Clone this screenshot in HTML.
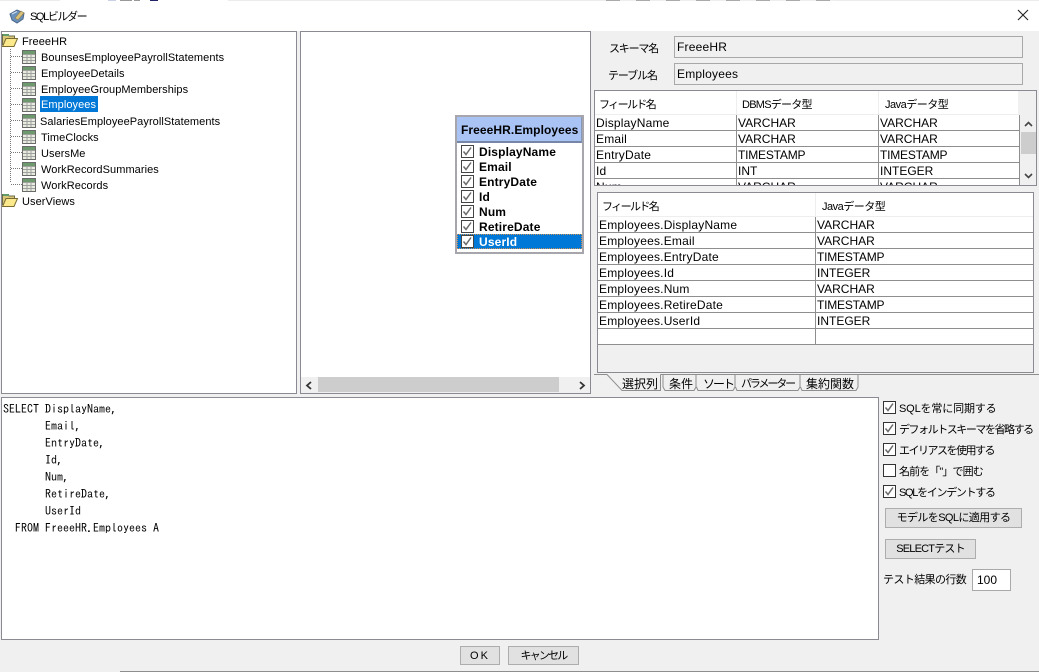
<!DOCTYPE html>
<html><head><meta charset="utf-8"><style>
html,body{margin:0;padding:0}
body{width:1039px;height:672px;position:relative;overflow:hidden;background:#f0f0f0;font:12px "Liberation Sans","Noto Sans CJK JP",sans-serif;color:#000}
div,span,svg{position:absolute;box-sizing:border-box}
.t{white-space:nowrap;line-height:16px;height:16px}
.s{font-size:11px;margin-top:1px}
.tr{font-size:11px;letter-spacing:.07px;margin-top:1px}
.n{letter-spacing:.2px}
.b{border:1px solid #8a8a92;background:#fff}
.h{left:0;height:1px;background:#8e8e8e}
.v{width:1px;background:#8e8e8e}
.btn{background:#e1e1e1;border:1px solid #adadad;text-align:center;line-height:19px;white-space:nowrap;font-size:11px}
.tb{left:461px;font:bold 12px/15px "Liberation Sans",sans-serif;letter-spacing:.15px;white-space:nowrap}
</style></head><body>
<svg width="0" height="0" style="left:0;top:0"><defs>
<g id="tbl"><rect x=".5" y=".5" width="13" height="13" fill="#e8ecdf" stroke="#6a6a6a"/><rect x="1" y="1" width="12" height="3" fill="#6d9a6d"/><path d="M1 4.500H13M1 7.500H13M1 10.500H13M5 4V13M9 4V13" stroke="#a0a0a0" fill="none"/></g>
<g id="fld"><path d="M1.500 13V2.500H7L8 4H13.500V6" fill="#d8c878" stroke="#6b6b45"/><path d="M2 2H8V4H2z" fill="#5f9a6a"/><path d="M1.500 14.500L5 6.500H16.500L13 14.500Z" fill="#fbe98b" stroke="#7a6a30"/></g>
<g id="chk"><path d="M2.500 6.500L5 9.500L10 2.500" fill="none" stroke="#6a6a6a" stroke-width="1.500"/></g>
</defs></svg>

<!-- title bar -->
<div style="left:0;top:0;width:1039px;height:31px;background:#fff"></div>
<div style="left:0;top:0;width:1039px;height:1px;background:#ececec"></div>
<div style="left:60px;top:0;width:168px;height:1px;background:linear-gradient(90deg,#fff 0,#fff 48px,#c8d0ea 48px,#c8d0ea 56px,#fff 56px,#fff 60px,#999 60px,#999 72px,#fff 72px,#fff 74px,#999 74px,#999 80px,#fff 80px,#fff 90px,#226 90px,#226 98px,#fff 98px)"></div>
<div style="left:606px;top:0;width:230px;height:1px;background:repeating-linear-gradient(90deg,#aaa 0 14px,#eee 14px 30px)"></div>
<svg style="left:9px;top:8px" width="17" height="16"><path d="M1 6L8 2L15 5L14 11L8 15L3 12Z" fill="#6a90bc" stroke="#4a6688"/><path d="M6 10L12 3L15 5L9 12Z" fill="#d9c27a" stroke="#8a7a50" stroke-width=".6"/><path d="M3 6L8 3.500" stroke="#d4e2f0" fill="none"/></svg>
<div class="t s" style="left:30px;top:8px;letter-spacing:-1.400px">SQLビルダー</div>
<svg style="left:1017px;top:9px" width="12" height="12"><path d="M1 1L11 11M11 1L1 11" stroke="#222" stroke-width="1.100" fill="none"/></svg>

<!-- tree -->
<div class="b" style="left:1px;top:31px;width:296px;height:363px"></div>
<svg style="left:0;top:31px" width="40" height="180">
<path d="M10.500 18V152M11 25.500H22M11 41.500H22M11 57.500H22M11 73.500H22M11 89.500H22M11 105.500H22M11 121.500H22M11 137.500H22M11 153.500H22" stroke="#777" stroke-dasharray="1 1" fill="none"/>
<use href="#fld" x="1" y="1"/><use href="#fld" x="1" y="161"/>
<use href="#tbl" x="22" y="19"/><use href="#tbl" x="22" y="35"/><use href="#tbl" x="22" y="51"/><use href="#tbl" x="22" y="67"/><use href="#tbl" x="22" y="83"/><use href="#tbl" x="22" y="99"/><use href="#tbl" x="22" y="115"/><use href="#tbl" x="22" y="131"/><use href="#tbl" x="22" y="147"/>
</svg>
<div class="t tr" style="left:22px;top:33px">FreeeHR</div>
<div class="t tr" style="left:41px;top:49px">BounsesEmployeePayrollStatements</div>
<div class="t tr" style="left:41px;top:65px">EmployeeDetails</div>
<div class="t tr" style="left:41px;top:81px">EmployeeGroupMemberships</div>
<div class="t tr" style="left:40px;top:95px;width:58px;background:#0078d7;color:#fff;padding-left:1px;line-height:18px">Employees</div>
<div class="t tr" style="left:40px;top:113px">SalariesEmployeePayrollStatements</div>
<div class="t tr" style="left:41px;top:129px">TimeClocks</div>
<div class="t tr" style="left:41px;top:145px">UsersMe</div>
<div class="t tr" style="left:41px;top:161px">WorkRecordSummaries</div>
<div class="t tr" style="left:41px;top:177px">WorkRecords</div>
<div class="t tr" style="left:22px;top:193px">UserViews</div>

<!-- canvas -->
<div class="b" style="left:300px;top:31px;width:291px;height:363px"></div>
<div style="left:301px;top:377px;width:289px;height:16px;background:#f0f0f0"></div>
<div style="left:318px;top:377px;width:241px;height:15px;background:#cdcdcd"></div>
<svg style="left:301px;top:377px" width="289" height="16"><path d="M10 5L6 8.500L10 12M279 5L283 8.500L279 12" stroke="#333" stroke-width="1.800" fill="none"/></svg>

<!-- table widget -->
<div style="left:455px;top:115px;width:129px;height:139px;background:#fff;border:2px solid #a6a6ac"></div>
<div style="left:457px;top:117px;width:125px;height:26px;background:#a9c3f5;border-bottom:2px solid #7686a6;border-right:1px solid #8898b8"></div>
<div class="t" style="left:461px;top:122px;font:bold 12px/16px 'Liberation Sans',sans-serif;letter-spacing:.08px">FreeeHR.Employees</div>
<div style="left:457px;top:234px;width:125px;height:15px;background:#0078d7;outline:1px dotted #d09050;outline-offset:-1px"></div>
<svg style="left:461px;top:144px" width="16" height="106">
<g fill="#fff" stroke="#444"><rect x=".5" y="1.500" width="12" height="12"/><rect x=".5" y="16.500" width="12" height="12"/><rect x=".5" y="31.500" width="12" height="12"/><rect x=".5" y="46.500" width="12" height="12"/><rect x=".5" y="61.500" width="12" height="12"/><rect x=".5" y="76.500" width="12" height="12"/><rect x=".5" y="91.500" width="12" height="12"/></g>
<use href="#chk" y="1"/><use href="#chk" y="16"/><use href="#chk" y="31"/><use href="#chk" y="46"/><use href="#chk" y="61"/><use href="#chk" y="76"/><use href="#chk" y="91"/>
</svg>
<div class="tb" style="left:479px;top:145px">DisplayName</div>
<div class="tb" style="left:479px;top:160px">Email</div>
<div class="tb" style="left:479px;top:175px">EntryDate</div>
<div class="tb" style="left:479px;top:190px">Id</div>
<div class="tb" style="left:479px;top:205px">Num</div>
<div class="tb" style="left:479px;top:220px">RetireDate</div>
<div class="tb" style="left:479px;top:235px;color:#fff">UserId</div>

<!-- schema fields -->
<div class="t s" style="left:609px;top:40px;letter-spacing:-1.200px">スキーマ名</div>
<div class="t s" style="left:608px;top:67px;letter-spacing:-1.100px">テーブル名</div>
<div style="left:674px;top:36px;width:349px;height:22px;border:1px solid #a9a9a9;line-height:20px;padding-left:2px;letter-spacing:.2px">FreeeHR</div>
<div style="left:674px;top:63px;width:349px;height:22px;border:1px solid #a9a9a9;line-height:20px;padding-left:2px;letter-spacing:.2px">Employees</div>

<!-- table 1 -->
<div style="left:594px;top:90px;width:443px;height:96px;border:1px solid #8a8a92;background:#f0f0f0;overflow:hidden">
<div style="left:0;top:0;width:423px;height:24px;background:#fff;border-bottom:1px solid #eee"></div>
<div style="left:0;top:24px;width:424px;height:70px;background:#fff"></div>
<div class="h" style="top:39px;width:424px"></div><div class="h" style="top:55px;width:424px"></div><div class="h" style="top:71px;width:424px"></div><div class="h" style="top:87px;width:424px"></div>
<div class="v" style="left:141px;top:24px;height:70px"></div><div class="v" style="left:283px;top:24px;height:70px"></div><div class="v" style="left:424px;top:24px;height:70px"></div>
<div style="left:141px;top:0;width:1px;height:24px;background:#eee"></div><div style="left:283px;top:0;width:1px;height:24px;background:#eee"></div>
<div class="t s" style="left:4px;top:5px;letter-spacing:-1.600px">フィールド名</div><div class="t s" style="left:147px;top:5px;letter-spacing:-.750px">DBMSデータ型</div><div class="t s" style="left:290px;top:5px;letter-spacing:-.500px">Javaデータ型</div>
<div class="t n" style="left:1px;top:24px">DisplayName</div><div class="t" style="left:143px;top:24px">VARCHAR</div><div class="t" style="left:285px;top:24px">VARCHAR</div>
<div class="t n" style="left:1px;top:40px">Email</div><div class="t" style="left:143px;top:40px">VARCHAR</div><div class="t" style="left:285px;top:40px">VARCHAR</div>
<div class="t n" style="left:1px;top:56px">EntryDate</div><div class="t" style="left:143px;top:56px;letter-spacing:-.2px">TIMESTAMP</div><div class="t" style="left:285px;top:56px;letter-spacing:-.2px">TIMESTAMP</div>
<div class="t n" style="left:1px;top:72px">Id</div><div class="t" style="left:143px;top:72px">INT</div><div class="t" style="left:285px;top:72px">INTEGER</div>
<div class="t n" style="left:1px;top:88px">Num</div><div class="t" style="left:143px;top:88px">VARCHAR</div><div class="t" style="left:285px;top:88px">VARCHAR</div>
<div style="left:426px;top:41px;width:15px;height:22px;background:#cdcdcd"></div>
<svg style="left:426px;top:24px" width="15" height="70"><path d="M4 11L7.500 7.500L11 11M4 59L7.500 62.500L11 59" stroke="#444" stroke-width="1.600" fill="none"/></svg>
</div>

<!-- table 2 -->
<div style="left:597px;top:192px;width:437px;height:181px;border:1px solid #8a8a92;background:#f0f0f0;overflow:hidden">
<div style="left:0;top:0;width:436px;height:152px;background:#fff"></div>
<div style="left:0;top:23px;width:436px;height:1px;background:#eee"></div>
<div class="h" style="top:39px;width:436px"></div><div class="h" style="top:55px;width:436px"></div><div class="h" style="top:71px;width:436px"></div><div class="h" style="top:87px;width:436px"></div><div class="h" style="top:103px;width:436px"></div><div class="h" style="top:119px;width:436px"></div><div class="h" style="top:135px;width:436px"></div><div class="h" style="top:151px;width:436px"></div>
<div class="v" style="left:217px;top:24px;height:128px"></div><div style="left:217px;top:0;width:1px;height:24px;background:#eee"></div>
<div class="t s" style="left:4px;top:5px;letter-spacing:-1.600px">フィールド名</div><div class="t s" style="left:224px;top:5px;letter-spacing:-.500px">Javaデータ型</div>
<div class="t n" style="left:1px;top:24px">Employees.DisplayName</div><div class="t" style="left:219px;top:24px">VARCHAR</div>
<div class="t n" style="left:1px;top:40px">Employees.Email</div><div class="t" style="left:219px;top:40px">VARCHAR</div>
<div class="t n" style="left:1px;top:56px">Employees.EntryDate</div><div class="t" style="left:219px;top:56px;letter-spacing:-.2px">TIMESTAMP</div>
<div class="t n" style="left:1px;top:72px">Employees.Id</div><div class="t" style="left:219px;top:72px">INTEGER</div>
<div class="t n" style="left:1px;top:88px">Employees.Num</div><div class="t" style="left:219px;top:88px">VARCHAR</div>
<div class="t n" style="left:1px;top:104px">Employees.RetireDate</div><div class="t" style="left:219px;top:104px;letter-spacing:-.2px">TIMESTAMP</div>
<div class="t n" style="left:1px;top:120px">Employees.UserId</div><div class="t" style="left:219px;top:120px">INTEGER</div>
</div>

<!-- tabs -->
<svg style="left:592px;top:372px" width="447" height="22"><path d="M2 2.500H15L30 18.500H68.500V2.500M68.500 2.500H447M71 3V15L73 18.500H102L104 15V3M104.500 15L106 18.500H141L143 15V3M143.500 15L145 18.500H206L208 15V3M208.500 15L210 18.500H264L266 15V3" stroke="#8e8e8e" fill="none"/></svg>
<div class="t" style="left:622px;top:376px">選択列</div>
<div class="t" style="left:669px;top:376px">条件</div>
<div class="t" style="left:703px;top:376px;letter-spacing:-2px">ソート</div>
<div class="t s" style="left:741px;top:375px;letter-spacing:-2.100px">パラメーター</div>
<div class="t" style="left:806px;top:376px">集約関数</div>

<!-- SQL -->
<div class="b" style="left:1px;top:397px;width:878px;height:243px"></div>
<pre style="position:absolute;left:3px;top:401px;margin:0;font:12px/17px 'IPAGothic','Liberation Mono',monospace">SELECT DisplayName,
       Email,
       EntryDate,
       Id,
       Num,
       RetireDate,
       UserId
  FROM FreeeHR.Employees A</pre>

<!-- options -->
<svg style="left:883px;top:401px" width="15" height="100">
<g fill="#fff" stroke="#333"><rect x=".5" y=".5" width="12" height="12"/><rect x=".5" y="21.500" width="12" height="12"/><rect x=".5" y="42.500" width="12" height="12"/><rect x=".5" y="63.500" width="12" height="12"/><rect x=".5" y="84.500" width="12" height="12"/></g>
<use href="#chk" y="0"/><use href="#chk" y="21"/><use href="#chk" y="42"/><use href="#chk" y="84"/>
</svg>
<div class="t s" style="left:899px;top:400px;letter-spacing:-.15px">SQLを常に同期する</div>
<div class="t s" style="left:899px;top:421px;letter-spacing:-1.450px">デフォルトスキーマを省略する</div>
<div class="t s" style="left:899px;top:442px;letter-spacing:-1.500px">エイリアスを使用する</div>
<div class="t s" style="left:899px;top:463px;letter-spacing:-.9px">名前を「"」で囲む</div>
<div class="t s" style="left:899px;top:484px;letter-spacing:-1.300px">SQLをインデントする</div>
<div class="btn" style="left:885px;top:508px;width:137px;height:20px;letter-spacing:-.6px">モデルをSQLに適用する</div>
<div class="btn" style="left:885px;top:539px;width:91px;height:20px;letter-spacing:-.8px">SELECTテスト</div>
<div class="t s" style="left:883px;top:571px;letter-spacing:-.6px">テスト結果の行数</div>
<div style="left:972px;top:569px;width:39px;height:22px;background:#fff;border:1px solid #a9a9a9;line-height:20px;padding-left:4px">100</div>

<!-- bottom -->
<div class="btn" style="left:460px;top:646px;width:40px;height:19px;line-height:18px;letter-spacing:2px">OK</div>
<div class="btn" style="left:508px;top:646px;width:71px;height:19px;line-height:18px;letter-spacing:-1.800px">キャンセル</div>
<div style="left:120px;top:671px;width:919px;height:1px;background:#8e8e8e"></div>
</body></html>
